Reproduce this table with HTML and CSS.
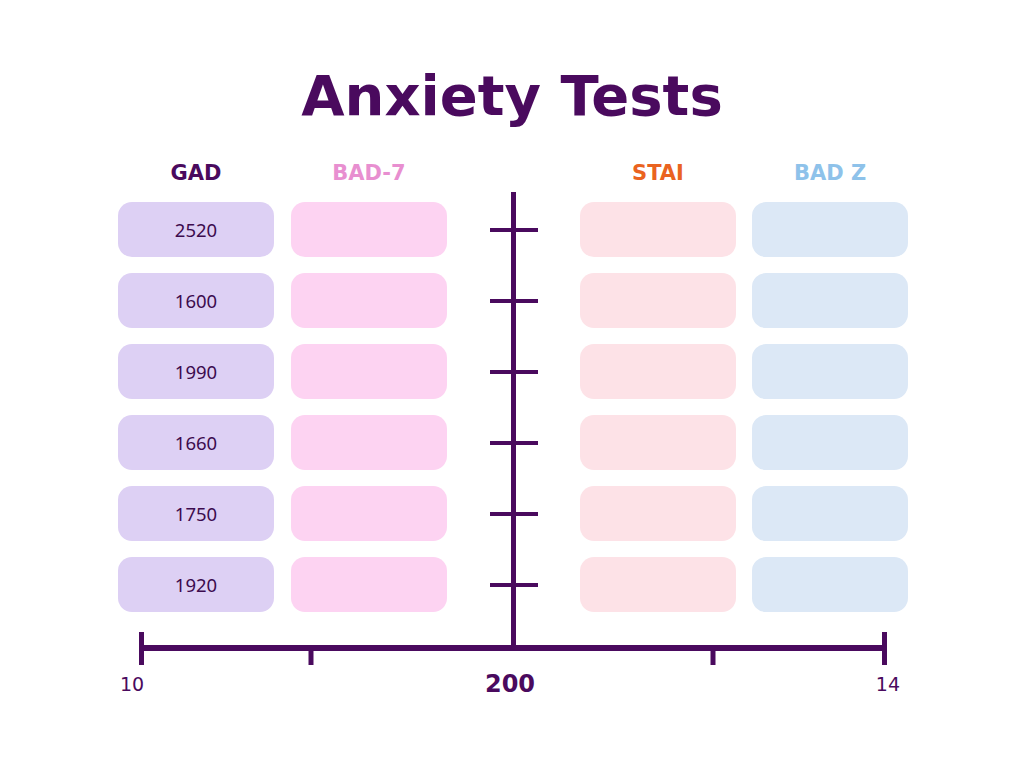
FILE: index.html
```html
<!DOCTYPE html>
<html lang="en">
<head>
    <meta charset="UTF-8">
    <meta name="viewport" content="width=device-width, initial-scale=1.0">
    <title>Anxiety Tests</title>
    <link rel="stylesheet" href="styles.css">
</head>
<body>
    <h1 class="title">Anxiety Tests</h1>

    <div class="chart">
        <div class="group group-left">
            <div class="column">
                <h4 class="head head-gad">GAD</h4>
                <div class="box box-gad">2520</div>
                <div class="box box-gad">1600</div>
                <div class="box box-gad">1990</div>
                <div class="box box-gad">1660</div>
                <div class="box box-gad">1750</div>
                <div class="box box-gad">1920</div>
            </div>
            <div class="column">
                <h4 class="head head-bad7">BAD-7</h4>
                <div class="box box-bad7"></div>
                <div class="box box-bad7"></div>
                <div class="box box-bad7"></div>
                <div class="box box-bad7"></div>
                <div class="box box-bad7"></div>
                <div class="box box-bad7"></div>
            </div>
        </div>

        <div class="axis">
            <div class="stem">
                <div class="tick"></div>
                <div class="tick"></div>
                <div class="tick"></div>
                <div class="tick"></div>
                <div class="tick"></div>
                <div class="tick"></div>
            </div>
        </div>

        <div class="group group-right">
            <div class="column">
                <h4 class="head head-stai">STAI</h4>
                <div class="box box-stai"></div>
                <div class="box box-stai"></div>
                <div class="box box-stai"></div>
                <div class="box box-stai"></div>
                <div class="box box-stai"></div>
                <div class="box box-stai"></div>
            </div>
            <div class="column">
                <h4 class="head head-badz">BAD Z</h4>
                <div class="box box-badz"></div>
                <div class="box box-badz"></div>
                <div class="box box-badz"></div>
                <div class="box box-badz"></div>
                <div class="box box-badz"></div>
                <div class="box box-badz"></div>
            </div>
        </div>
    </div>

    <svg class="x-axis" width="790" height="40" viewBox="0 0 790 40">
        <line x1="395.5" y1="0" x2="395.5" y2="20" stroke="#4a0a5e" stroke-width="5"/>
        <line x1="22" y1="18" x2="768" y2="18" stroke="#4a0a5e" stroke-width="6"/>
        <line x1="23.5" y1="2" x2="23.5" y2="35" stroke="#4a0a5e" stroke-width="5"/>
        <line x1="766.5" y1="2" x2="766.5" y2="35" stroke="#4a0a5e" stroke-width="5"/>
        <line x1="193" y1="18" x2="193" y2="35" stroke="#4a0a5e" stroke-width="5"/>
        <line x1="595" y1="18" x2="595" y2="35" stroke="#4a0a5e" stroke-width="5"/>
    </svg>

    <div class="labels">
        <span class="label-end">10</span>
        <span class="label-mid">200</span>
        <span class="label-end">14</span>
    </div>
</body>
</html>
```

FILE: styles.css
```css
*{
    margin: 0;
    padding: 0;
    box-sizing: border-box;
}
body{
    background: #fff;
    font-family: "Noto Sans", "Open Sans", sans-serif;
    color: #4a0a5e;
}
.title{
    text-align: center;
    font-family: "DejaVu Sans", sans-serif;
    font-size: 56px;
    font-weight: bold;
    line-height: 1;
    padding-top: 68px;
    height: 158px;
}
.chart{
    display: flex;
    width: 790px;
    margin-left: 118px;
    height: 472px;
}
.group{
    display: flex;
    padding-bottom: 18px;
}
.group-left{
    gap: 17px;
}
.group-right{
    gap: 16px;
}
.column{
    width: 156px;
    display: flex;
    flex-direction: column;
    gap: 16px;
}
.head{
    height: 32px;
    margin-bottom: -4px;
    text-align: center;
    font-family: "DejaVu Sans", sans-serif;
    font-size: 21px;
    font-weight: bold;
    line-height: 31px;
}
.head-gad{ color: #4a0a5e; }
.head-bad7{ color: #e88fd0; }
.head-stai{ color: #ea6320; }
.head-badz{ color: #8ec2ea; }

.box{
    height: 55px;
    border-radius: 14px;
    display: flex;
    align-items: center;
    justify-content: center;
    font-size: 18.5px;
    color: #3c0b4e;
}
.box-gad{ background: #ddd0f4; }
.box-bad7{ background: #fdd3f2; }
.box-stai{ background: #fde2e7; }
.box-badz{ background: #dce8f6; }

/* 中间的竖轴 */
.axis{
    width: 133px;
    padding-top: 34px;
    display: flex;
}
.stem{
    flex: 1;
    padding-top: 10px;
    display: flex;
    flex-direction: column;
    gap: 16px;
    background: linear-gradient(#4a0a5e, #4a0a5e) no-repeat center / 5px 100%;
}
.tick{
    height: 55px;
    background: linear-gradient(#4a0a5e, #4a0a5e) no-repeat center / 48px 4px;
}

.x-axis{
    display: block;
    margin-left: 118px;
}
.labels{
    width: 790px;
    margin-left: 118px;
    padding: 0 8px 0 2px;
    display: flex;
    justify-content: space-between;
    align-items: center;
    margin-top: 0;
    font-family: "DejaVu Sans", sans-serif;
}
.label-end{
    font-size: 19px;
    width: 26px;
}
.label-end:last-child{
    text-align: right;
}
.label-mid{
    font-size: 24px;
    font-weight: bold;
}
```
